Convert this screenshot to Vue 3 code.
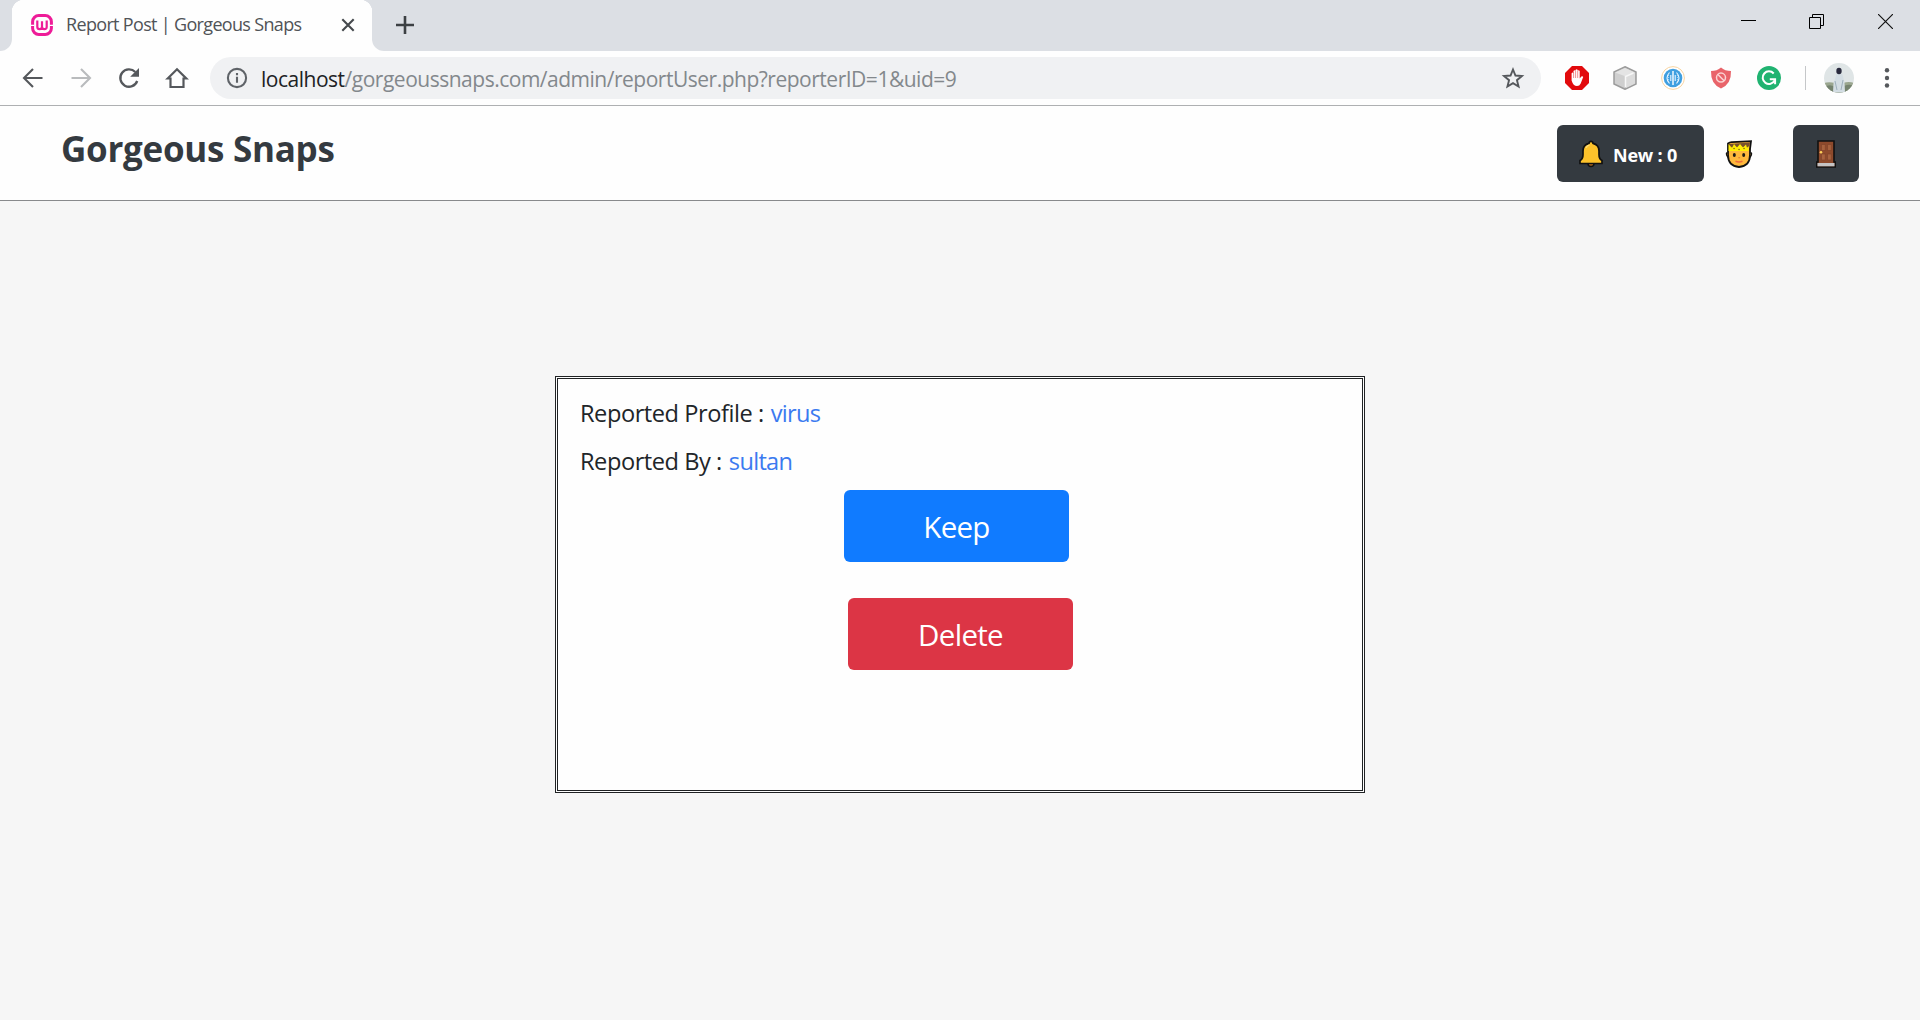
<script setup>
const reports = [
  { label: 'Reported Profile :', user: 'virus', kind: 'profile' },
  { label: 'Reported By :', user: 'sultan', kind: 'by' },
]
</script>

<template>
  <div class="window">
    <header class="tabstrip">
      <div class="edge"></div>
      <div class="tab">
        <svg class="favicon" width="22" height="22" viewBox="0 0 22 22" fill="none" stroke="#ee1c98">
          <rect x="1.6" y="1.6" width="18.8" height="18.8" rx="6.2" stroke-width="3" />
          <path d="M0 11.4h3.5M18.5 11.4H22" stroke="#fff" stroke-width="1.3" />
          <path d="M6.3 6.5v6.2q0 2.5 2.3 2.5T11 12.7V7.2v5.500q0 2.500 2.400 2.500t2.300-2.500V6.500" stroke-width="2.2" />
        </svg>
        <span class="tab-title">Report Post | Gorgeous Snaps</span>
        <svg class="tab-close" width="14" height="14" viewBox="0 0 14 14" stroke="#45494d" stroke-width="2.1"><path d="M1.300 1.300l11.400 11.400M12.700 1.300L1.300 12.700" /></svg>
      </div>
      <div class="after-tab">
        <svg width="20" height="20" viewBox="0 0 20 20" stroke="#3c4043" stroke-width="2.600"><path d="M1 10h18M10 1v18" /></svg>
      </div>
      <div class="controls">
        <svg class="minimize" width="15" height="15" viewBox="0 0 15 15"><path d="M0 6.500h15" stroke="#000" /></svg>
        <svg width="15" height="15" viewBox="0 0 15 15" fill="none" stroke="#000"><path d="M.5 3.500h11v11H.5zM3.500 3.500v-3h11v11h-3" /></svg>
        <svg width="15" height="15" viewBox="0 0 15 15" stroke="#111" stroke-width="1.150"><path d="M0 0l15 15M15 0L0 15" /></svg>
      </div>
    </header>

    <nav class="toolbar">
      <div class="nav-icons">
        <svg width="24" height="24" viewBox="0 0 24 24" fill="none" stroke="#55585c" stroke-width="2.100"><path d="M21.500 12H3.500M12 3l-9 9 9 9" /></svg>
        <svg width="24" height="24" viewBox="0 0 24 24" fill="none" stroke="#b9bbbd" stroke-width="2.100"><path d="M2.500 12h18M12 3l9 9-9 9" /></svg>
        <svg width="24" height="24" viewBox="0 0 24 24"><path d="M20.200 15A8.700 8.700 0 1 1 18.300 6" fill="none" stroke="#55585c" stroke-width="2.300" /><path d="M22 2v8.800h-8.800z" fill="#55585c" /></svg>
        <svg width="24" height="24" viewBox="0 0 24 24" fill="none" stroke="#55585c" stroke-width="2.200"><path d="M2.700 12.500L12 3.200l9.300 9.300h-2.800V21h-13v-8.500z" /></svg>
      </div>
      <div class="omnibox">
        <svg width="22" height="22" viewBox="0 0 22 22" fill="none" stroke="#5f6368" stroke-width="2.100"><circle cx="11" cy="11" r="9.100" /><path d="M11 9.800v6M11 6v2.200" /></svg>
        <span class="url"><b>localhost</b>/gorgeoussnaps.com/admin/reportUser.php?reporterID=1&amp;uid=9</span>
        <svg class="star" width="24" height="24" viewBox="0 0 24 24" fill="none" stroke="#55585c" stroke-width="1.900"><path d="M12 3.500l2.450 6 6.500.5-5 4.200 1.600 6.300L12 17.100l-5.550 3.400 1.600-6.300-5-4.200 6.500-.5z" /></svg>
      </div>
      <div class="extensions">
        <svg width="24" height="24" viewBox="0 0 24 24"><path d="M7 0h10l7 7v10l-7 7H7l-7-7V7z" fill="#e20a0d" /><path d="M6.600 14.500V7.200q1-1.400 1.900 0V5q1-1.400 2 0V4q1.200-1.500 2.200 0v1q1-1.300 2 0v7.400l1.600-2q1.500-.7 1.900.5l-2.500 6.500Q14.600 20 12 20q-3.800 0-5.400-5.500z" fill="#fff" /><path d="M8.600 6.500V12M10.600 5v7M12.700 5v7" stroke="#e20a0d" stroke-width=".45" /></svg>
        <svg width="24" height="24" viewBox="0 0 24 24"><path d="M12 .8L23 6v12l-11 5.300L1 18V6z" fill="#cfcfcf" stroke="#9c9c9c" stroke-width="1.500" /><path d="M2 6.500L12 2l10 4.500-9 4z" fill="#e4e4e4" /><path d="M13 10.500l9-4v11L13 22z" fill="#dcdcdc" /><path d="M12.500 21V10.500l8-3.500" stroke="#f7f7f7" stroke-width="1.500" fill="none" /></svg>
        <svg width="24" height="24" viewBox="0 0 24 24" fill="none"><circle cx="12" cy="12" r="11.400" fill="#fff" stroke="#f8d4a0" /><circle cx="12" cy="12" r="9.300" fill="#409fe0" /><path d="M12 5v14" stroke="#fff" stroke-width="1.400" /><path d="M9.800 9v6M14.200 9v6M8.500 6.500Q3.500 12 8.500 17.500M15.500 6.500Q20.500 12 15.500 17.500" stroke="#e7f5ff" stroke-width="1.100" /><path d="M7.600 9v6M16.400 9v6" stroke="#c4e4fa" stroke-width=".8" stroke-dasharray="1 1" /></svg>
        <svg width="24" height="24" viewBox="0 0 24 24" fill="none"><path d="M12 1.500Q16 5 22 5q.5 13-10 17.500Q1.500 18 2 5q6 0 10-3.500z" fill="#e9646a" /><circle cx="12" cy="11.600" r="4.500" stroke="#fbd3d3" stroke-width="1.500" /><path d="M8.900 8.500l6.200 6.200" stroke="#fbd3d3" stroke-width="1.500" /></svg>
        <svg width="24" height="24" viewBox="0 0 24 24" fill="none"><circle cx="12" cy="12" r="12" fill="#20b371" /><path d="M16.700 7.500A6.300 6.300 0 1 0 17.600 14.500" stroke="#fff" stroke-width="2" /><path d="M12.800 13.300h5.300v4.900" stroke="#fff" stroke-width="2" /></svg>
      </div>
      <div class="divider"></div>
      <svg class="avatar" width="30" height="30" viewBox="0 0 30 30">
        <defs><clipPath id="face"><circle cx="15" cy="15" r="15" /></clipPath></defs>
        <g clip-path="url(#face)">
          <path d="M0 0h30v30H0z" fill="#dfe5e6" />
          <path d="M0 20q5-1.500 11 0h8q6-2 11 0v10H0z" fill="#9aa68f" />
          <path d="M0 24q7-4 12 1l-2 5H0zM20 23q7-3 10 1v6H21z" fill="#75836f" />
          <path d="M12.500 11q3-1.500 6 .5l2 8 .5 10H9l.5-9z" fill="#d3dde3" />
          <path d="M11 18l2 9M19 17l-2 10" stroke="#9fb0bc" />
          <ellipse cx="15" cy="8" rx="2.700" ry="3.200" fill="#292a3d" />
        </g>
      </svg>
      <svg class="dots" width="6" height="22" viewBox="0 0 6 22" fill="#55585c"><circle cx="3" cy="3.200" r="2.200" /><circle cx="3" cy="11" r="2.200" /><circle cx="3" cy="18.500" r="2.200" /></svg>
    </nav>

    <section class="site-header">
      <h1><span>Gorgeous Snaps</span></h1>
      <button class="dark alerts">
        <svg width="24" height="28" viewBox="0 0 24 28"><circle cx="12" cy="23.500" r="3" fill="#b66b1d" stroke="#111" stroke-width="1.500" /><path d="M1 23.500v-3q3-1.500 3-6V11q0-6.200 6-7.600Q10.300 1.300 12 1.300t2 2.100q6 1.400 6 7.600v3.500q0 4.500 3 6v3z" fill="#fdc22b" stroke="#111" stroke-width="1.700" /><path d="M7 8q1-2.500 3.500-3" stroke="#ffdc72" stroke-width="1.500" fill="none" /></svg>
        <span>New : 0</span>
      </button>
      <svg class="prince" width="28" height="28" viewBox="0 0 28 28">
        <path d="M3 3.500q2-1.500 4-1.300L26 1.200 25 9v6q0 11-11 12Q3 26 3 15z" fill="#ffb93c" stroke="#111" stroke-width="1.800" />
        <path d="M4 4l21-1.500-.7 5H4z" fill="#79502d" />
        <path d="M3.500 4l3.500 4 2-4 3 3.500 3-3.500 3 3.500 3-3 1 3.500 2-2-.5 5h-20z" fill="#ffed05" />
        <path d="M9 8.500h.1M14 9.500h.1M19 8.500h.1" stroke="#735c1c" stroke-width="1.400" stroke-linecap="round" />
        <path d="M1.900 12.500q-1 3 1.700 5M26.100 12.500q1 3-1.700 5" stroke="#111" stroke-width="1.700" fill="#ffb93c" />
        <ellipse cx="9.300" cy="15" rx="1.500" ry="2.100" fill="#211d16" /><ellipse cx="18.700" cy="15" rx="1.500" ry="2.100" fill="#211d16" />
        <path d="M13.300 17.700h1.800" stroke="#e58230" stroke-width="1.200" /><path d="M10.500 21.300q3.500 1.500 7 0" fill="none" stroke="#ef6b3d" stroke-width="1.500" />
      </svg>
      <button class="dark logout">
        <svg width="20" height="28" viewBox="0 0 20 28"><path d="M2 1h16v21h1.200v5H.8v-5H2z" fill="#8e4a2c" stroke="#111" stroke-width="1.600" /><path d="M1.500 23h17v3.300h-17z" fill="#c4c3c4" /><path d="M5.500 4.500h3.800v6H5.500zm6 0h3.800v6h-3.800zM5.500 14h3.800v6H5.500zm6 0h3.800v6h-3.800z" fill="#a7623e" stroke="#7e4128" stroke-width=".6" /><circle cx="5" cy="12.300" r="1.300" fill="#ffd35b" /></svg>
      </button>
    </section>

    <main>
      <section class="card">
        <p v-for="r in reports" :key="r.kind" :class="r.kind"><span class="label">{{ r.label }}</span><a>{{ r.user }}</a></p>
        <button class="action keep"><span>Keep</span></button>
        <button class="action delete"><span>Delete</span></button>
      </section>
    </main>
  </div>
</template>

<style>
body { background: #f6f6f6; }
</style>

<style scoped>
* { box-sizing: border-box; }
.window { width: 1920px; height: 1020px; display: flex; flex-direction: column; overflow: hidden; background: #f6f6f6; font-family: "Open Sans", "Noto Sans", sans-serif; }
svg { display: block; flex: none; }
button { border: 0; padding: 0; font-family: inherit; }
span, a { white-space: nowrap; }
.tabstrip { height: 51px; flex: none; display: flex; background: #fefefe; }
.edge { width: 12px; background: #dcdfe4; border-bottom-right-radius: 12px; }
.tab { width: 360px; display: flex; align-items: center; padding: 0 17px 0 19px; background: radial-gradient(circle at 12px 12px, #fefefe 12px, #dcdfe4 12.5px) left top / 12px 12px no-repeat, radial-gradient(circle at 0 12px, #fefefe 12px, #dcdfe4 12.5px) right top / 12px 12px no-repeat, #fefefe; }
.tab-title { width: 276px; margin-left: 13px; font-size: 18px; line-height: 24px; color: #505357; letter-spacing: -0.67px; padding-bottom: 3px; }
.favicon, .tab-close { margin-bottom: 1px; }
.after-tab { flex: 1; background: #dcdfe4; border-bottom-left-radius: 12px; padding: 15px 0 0 23px; }
.controls { display: flex; gap: 54px; padding: 14px 27px 0 0; background: #dcdfe4; }
.minimize { margin: 0 -1px 0 1px; }
.toolbar { height: 55px; flex: none; display: flex; align-items: center; background: #fefefe; border-bottom: 1px solid #aeb0b2; }
.nav-icons { display: flex; gap: 24px; margin-left: 21px; width: 189px; }
.omnibox { width: 1331px; height: 42px; border-radius: 21px; background: #f0f1f3; display: flex; align-items: center; padding: 0 16px; }
.url { margin-left: 13px; flex: 1; font-size: 21px; line-height: 28px; color: #83888c; letter-spacing: -0.49px; padding-top: 1px; }
.url b { font-weight: 400; color: #202124; }
.extensions { display: flex; gap: 24px; margin-left: 24px; }
.divider { width: 1px; height: 24px; background: #c5c7c9; margin-left: 24px; }
.avatar { margin-left: 18px; }
.dots { margin-left: 30px; }
.site-header { height: 95px; flex: none; display: flex; align-items: flex-start; padding: 19px 61px 0 61px; background: #fefefe; border-bottom: 1px solid #888a8c; }
h1 { margin: 0; flex: 1; font-size: 35px; line-height: 48px; font-weight: 700; color: #343a40; }
h1 span { letter-spacing: -0.28px; }
.dark { height: 57px; border-radius: 6px; background: #343a40; color: #fff; display: flex; align-items: center; }
.alerts { width: 147px; padding-left: 22px; font-weight: 700; font-size: 18px; letter-spacing: -0.2px; }
.alerts span { margin: 3px 0 0 10px; }
.prince { margin: 15px 40px 0 21px; }
.logout { width: 66px; justify-content: center; }
main { flex: 1; display: flex; justify-content: center; align-items: flex-start; padding-top: 175px; }
.card { width: 810px; height: 417px; border: 3px double #202224; background: #fefefe; padding: 16px 22px; display: flex; flex-direction: column; }
p { margin: 0; height: 48px; font-size: 23.6px; line-height: 36px; letter-spacing: -0.45px; color: #212529; display: flex; }
p a { color: #3b7af0; margin-left: 7px; letter-spacing: -0.7px; }
.action { width: 225px; height: 72px; border-radius: 6px; color: #fff; font-size: 29.5px; line-height: 40px; letter-spacing: -0.7px; padding-top: 2px; flex: none; }
.keep { background: #107bff; margin: -1px 0 36px 264px; }
.delete { background: #dc3545; margin-left: 268px; }
</style>
